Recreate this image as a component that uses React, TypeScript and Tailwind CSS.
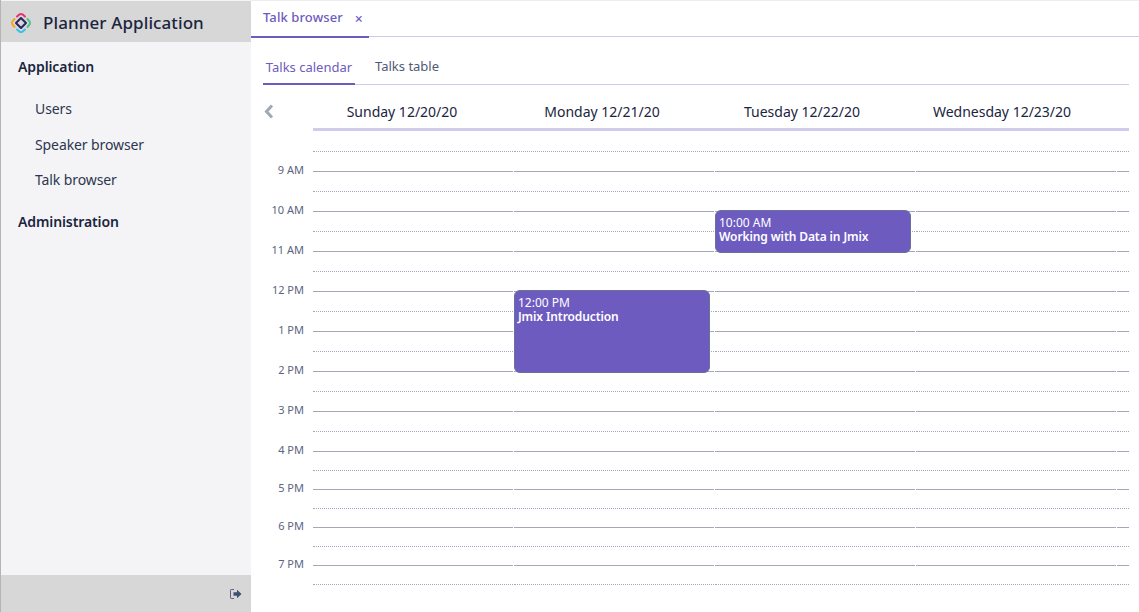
import React from 'react';

const days = ['Sunday 12/20/20', 'Monday 12/21/20', 'Tuesday 12/22/20', 'Wednesday 12/23/20'];

const hours = [
  { label: '9 AM', h: 'h-[40px]', a: 'h-[20px]', b: 'h-[20px]' },
  { label: '10 AM', h: 'h-[40px]', a: 'h-[20px]', b: 'h-[20px]' },
  { label: '11 AM', h: 'h-[40px]', a: 'h-[20px]', b: 'h-[20px]' },
  { label: '12 PM', h: 'h-[40px]', a: 'h-[20px]', b: 'h-[20px]' },
  { label: '1 PM', h: 'h-[40px]', a: 'h-[20px]', b: 'h-[20px]' },
  { label: '2 PM', h: 'h-[40px]', a: 'h-[20px]', b: 'h-[20px]' },
  { label: '3 PM', h: 'h-[40px]', a: 'h-[20px]', b: 'h-[20px]' },
  { label: '4 PM', h: 'h-[38px]', a: 'h-[20px]', b: 'h-[19px]' },
  { label: '5 PM', h: 'h-[38px]', a: 'h-[19px]', b: 'h-[19px]' },
  { label: '6 PM', h: 'h-[38px]', a: 'h-[19px]', b: 'h-[19px]' },
  { label: '7 PM', h: 'h-[38px]', a: 'h-[19px]', b: 'h-[19px]' },
];

const Logo = () => (
  <svg width="22" height="22" viewBox="0 0 22 22" fill="none">
    <path d="M7 4.5 L9.5 2.4 Q11 1.5 12.5 2.4 L15 4.5" stroke="#e8336d" strokeWidth="2" strokeLinecap="round" />
    <path d="M17.5 7 L19.6 9.5 Q20.5 11 19.6 12.5 L17.5 15" stroke="#4cc38a" strokeWidth="2" strokeLinecap="round" />
    <path d="M15 17.5 L12.5 19.6 Q11 20.5 9.5 19.6 L7 17.5" stroke="#35c4e8" strokeWidth="2" strokeLinecap="round" />
    <path d="M4.5 15 L2.4 12.5 Q1.5 11 2.4 9.5 L4.5 7" stroke="#f5a623" strokeWidth="2" strokeLinecap="round" />
    <path d="M11 6 L16 11 L11 16 L6 11 Z" stroke="#2b2460" strokeWidth="2" strokeLinejoin="round" />
  </svg>
);

const GridRow = ({ h, dotted }: { h: string; dotted?: boolean }) => (
  <div className={`flex ${h} items-end`}>
    {[0, 1, 2, 3, 4].map((i) => (
      <div
        key={i}
        className={`border-b border-[#a2a8ba] ${dotted ? 'border-dotted' : ''} ${i === 4 ? 'w-[12px]' : 'mr-px w-[200px]'}`}
      />
    ))}
  </div>
);

export default function App() {
  return (
    <div className="flex h-[612px] w-[1139px] overflow-hidden bg-white font-['Noto_Sans',sans-serif] text-[#1a2540]">
      <aside className="flex w-[251px] shrink-0 flex-col border-l border-[#b5b5b0] bg-[#f4f4f6]">
        <div className="mt-px flex h-[41px] items-center gap-[11px] bg-[#d7d7d7] pl-[9px] pt-[2px]">
          <Logo />
          <span className="text-[17px] font-medium tracking-[0.1px]">Planner Application</span>
        </div>
        <nav className="flex flex-1 flex-col pl-[17px] text-[14px]">
          <div className="mt-[15px] h-[20px] font-semibold leading-[20px] tracking-[-0.1px]">Application</div>
          <div className="mt-[22px] flex flex-col pl-[17px] tracking-[-0.1px] text-[#2d3650]">
            <span className="h-[36px] leading-[20px]">Users</span>
            <span className="h-[35px] leading-[20px]">Speaker browser</span>
            <span className="h-[36px] leading-[20px]">Talk browser</span>
          </div>
          <div className="mt-[6px] h-[20px] font-semibold leading-[20px] tracking-[-0.1px]">Administration</div>
        </nav>
        <div className="flex h-[37px] items-center justify-end bg-[#d7d7d7] pr-[9px]">
          <svg width="12" height="10" viewBox="0 0 12 10" fill="none">
            <path d="M4 .5H1.2Q.5.5.5 1.2v7.6q0 .7.7.7H4" stroke="#6b5a8c" strokeWidth="1" />
            <path d="M3.5 3.2H7V.8L11.5 5 7 9.2V6.8H3.5Z" fill="#3f4f70" />
          </svg>
        </div>
      </aside>

      <main className="flex min-w-0 flex-1 flex-col">
        <div className="flex h-[37px] border-b border-t border-[#cfc9ea] border-t-[#eceef2]">
          <div className="-mb-px flex h-[37px] w-[118px] items-center border-b-2 border-[#6d5bc0] pb-[2px] pl-[12px] text-[13px] font-medium tracking-[0.1px] text-[#6d5bc0]">
            Talk browser
            <span className="ml-[12px] mt-px text-[14px] text-[#6d5bc0]">×</span>
          </div>
        </div>

        <div className="flex flex-1 flex-col pl-[12px] pr-[10px]">
          <div className="flex h-[48px] items-end border-b border-[#cfc9ea] text-[13px]">
            <div className="-mb-px flex h-[27px] w-[92px] items-start justify-center border-b-2 border-[#6d5bc0] text-[#6d5bc0]">Talks calendar</div>
            <div className="flex h-[27px] items-start pl-[20px] text-[#4f5a75]">Talks table</div>
          </div>

          <div className="flex">
            <div className="w-[50px] shrink-0">
              <svg className="ml-px mt-[19px]" width="10" height="15" viewBox="0 0 10 15" fill="none">
                <path d="M8 1.5 L2.5 7.5 L8 13.5" stroke="#a2a8ba" strokeWidth="3" />
              </svg>
              <div className="mt-[22px] h-[20px]" />
              <div className="flex flex-col pr-[9px] text-right text-[11px] leading-none text-[#5a6580]">
                {hours.map((hr) => (
                  <span key={hr.label} className={`${hr.h} pt-[3px]`}>{hr.label}</span>
                ))}
              </div>
            </div>

            <div className="min-w-0 flex-1">
              <div className="flex h-[46px] items-center border-b-[3px] border-[#d0cbec] pt-[9px] text-[14px]">
                <div className="-ml-[11px] flex">
                  {days.map((d) => (
                    <span key={d} className="w-[200px] shrink-0 text-center">{d}</span>
                  ))}
                </div>
              </div>
              <div className="relative">
                <GridRow h="h-[21px]" dotted />
                {hours.map((hr) => (
                  <React.Fragment key={hr.label}>
                    <GridRow h={hr.a} />
                    <GridRow h={hr.b} dotted />
                  </React.Fragment>
                ))}
                <div className="absolute left-[201px] top-[159px] h-[83px] w-[196px] rounded-[6px] border border-[#68719a] bg-[#6d5bc0] px-[3px] pt-[5px] text-[12px] text-white">
                  <div className="leading-[14px]">12:00 PM</div>
                  <div className="font-semibold leading-[14px] tracking-[-0.1px]">Jmix Introduction</div>
                </div>
                <div className="absolute left-[402px] top-[79px] h-[43px] w-[196px] rounded-[6px] border border-[#68719a] bg-[#6d5bc0] px-[3px] pt-[5px] text-[12px] text-white">
                  <div className="leading-[14px]">10:00 AM</div>
                  <div className="font-semibold leading-[14px] tracking-[-0.1px]">Working with Data in Jmix</div>
                </div>
              </div>
            </div>
          </div>
        </div>
      </main>
    </div>
  );
}
